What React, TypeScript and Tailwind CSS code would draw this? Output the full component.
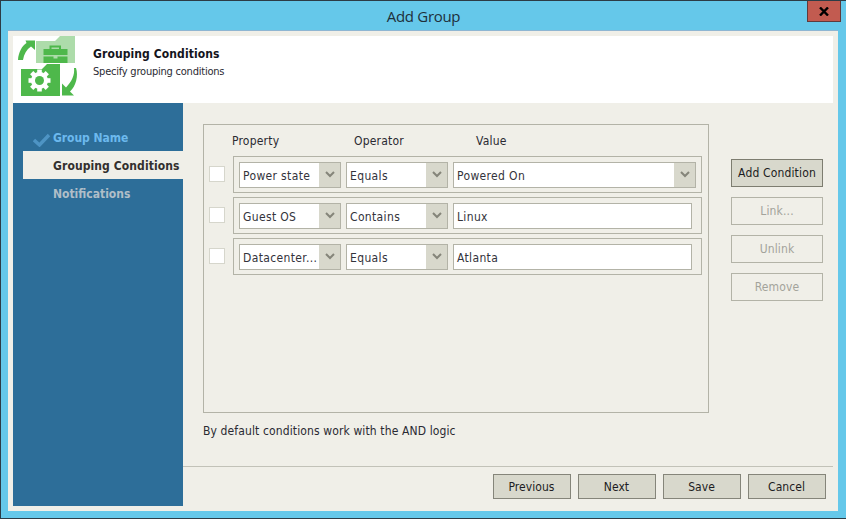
import React from "react";

const font = { fontFamily: '"DejaVu Sans Condensed", "DejaVu Sans", sans-serif' };

function Chevron() {
  return (
    <svg width="10" height="7" viewBox="0 0 10 7">
      <path d="M1 1 L5 5 L9 1" fill="none" stroke="#85857a" strokeWidth="2" />
    </svg>
  );
}

function Select({ label, w }: { label: string; w: string }) {
  return (
    <div className={`${w} h-[26px] flex border border-[#b3b3a7] bg-white`}>
      <div className="flex-1 min-w-0 pl-[3px] pt-[1px] leading-[24px] text-[12px] text-[#33333b] whitespace-nowrap overflow-hidden tracking-[0.35px]">{label}</div>
      <div className="w-[21px] bg-[#d8d8cc] flex items-center justify-center"><Chevron /></div>
    </div>
  );
}

function TextField({ label }: { label: string }) {
  return (
    <div className="w-[239px] h-[26px] border border-[#b3b3a7] bg-white pl-[3px] pt-[1px] leading-[24px] text-[12px] text-[#33333b] tracking-[0.35px]">{label}</div>
  );
}

function Row({ prop, op, value, select }: { prop: string; op: string; value: string; select?: boolean }) {
  return (
    <div className="flex items-start gap-[8px]">
      <div className="w-[16px] h-[16px] mt-[10px] bg-white border border-[#d6d6cc]" />
      <div className="w-[469px] h-[37px] border border-[#b3b3a7] pl-[5px] flex items-center gap-[5px]">
        <Select label={prop} w="w-[102px]" />
        <Select label={op} w="w-[102px]" />
        {select ? <Select label={value} w="w-[243px]" /> : <TextField label={value} />}
      </div>
    </div>
  );
}

function SideButton({ label, active }: { label: string; active?: boolean }) {
  return (
    <div className={`w-[92px] h-[28px] flex items-center justify-center text-[12px] tracking-[0.15px] border ${active ? "bg-[#d8d8cc] border-[#7d7d70] text-[#1c1c22]" : "border-[#b3b3a7] text-[#a3a39b]"}`}>{label}</div>
  );
}

function FootButton({ label }: { label: string }) {
  return (
    <div className="w-[78px] h-[25px] flex items-center justify-center bg-[#d8d8cc] border border-[#85857a] text-[12px] text-[#1c1c22] tracking-[0.05px] pr-[1px]">{label}</div>
  );
}

function Logo() {
  return (
    <svg width="64" height="64" viewBox="16 36 64 64" className="shrink-0">
      <path d="M36 41 H55 L60 36 H75 V63 H36 Z" fill="#addcaa" />
      <path d="M49.5 49 V45.5 H61 V49 H59 V47.5 H51.5 V49 Z" fill="#4eb84b" />
      <path d="M43.5 49 H67.5 V55 H43.5 Z M43.5 56.5 H53.5 V58.5 H57.5 V56.5 H67.5 V63 H43.5 Z" fill="#4eb84b" />
      <path d="M19.5 63.5 H61 V97 H19.5 Z" fill="#fff" />
      <path d="M21 69 H42 L47 64 H60 V96 H21 Z" fill="#4eb84b" />
      <path d="M18 60 C18.5 52 22 46 26.5 43 L25.5 40.5 H35 V50 L31 46.5 C26.5 49.5 24 54 23 60 Z" fill="#4eb84b" />
      <path d="M76 68 C78.5 76 76 86 70 91.5 L74 95.5 H62 V83.5 L66 87.5 C71.5 82 75 75 74 68 Z" fill="#4eb84b" />
      <g fill="#fff">
        <circle cx="39.5" cy="80.5" r="8.5" />
        {[0, 45, 90, 135, 180, 225, 270, 315].map((a) => (
          <rect key={a} x="37.2" y="69.5" width="4.6" height="5" transform={`rotate(${a} 39.5 80.5)`} />
        ))}
      </g>
      <circle cx="39.5" cy="80.5" r="4.5" fill="#4eb84b" />
    </svg>
  );
}

export default function App() {
  return (
    <div className="w-[846px] h-[519px] bg-[#65c8ea] border-t border-l border-b border-[#2c3c46] flex flex-col overflow-hidden" style={font}>
      <div className="h-[29px] shrink-0 grid grid-cols-[1fr_auto_1fr] items-start">
        <div />
        <div className="text-[15px] leading-[30px] text-[#20303a] tracking-[-0.3px]" style={{ fontFamily: '"Open Sans", "Noto Sans", sans-serif' }}>Add Group</div>
        <div className="justify-self-end mr-[5px] w-[34px] h-[21px] bg-[#c25b50] border-x border-b border-[#5f3a3c] flex items-center justify-center">
          <svg width="10" height="9" viewBox="0 0 10 9"><path d="M1 0.5 L9 8.5 M9 0.5 L1 8.5" stroke="#000" strokeWidth="2.4" /></svg>
        </div>
      </div>
      <div className="ml-[7px] w-[830px] h-[481px] border-t border-[#8fb6d2] bg-[#f0efe8] p-[5px] flex flex-col">
        <div className="h-[67px] bg-white flex shrink-0 pl-[3px]">
          <Logo />
          <div className="pl-[13px] pt-[10px] text-black">
            <div className="font-bold text-[12px] leading-[16px] text-[#14141c] tracking-[0.1px]">Grouping Conditions</div>
            <div className="text-[11px] leading-[16px] mt-[2px] text-[#2a2a32] tracking-[-0.22px]">Specify grouping conditions</div>
          </div>
        </div>
        <div className="flex flex-1 min-h-0">
          <div className="w-[170px] h-[403px] bg-[#2d6e99] pt-[20px] font-bold text-[12px] shrink-0">
            <div className="h-[28px] pt-[2px] flex items-center text-[#6cb9ee]">
              <svg width="20" height="14" viewBox="0 0 20 14" className="ml-[20px] mt-[3px]"><path d="M1 7 L6.5 12 L16 2" fill="none" stroke="#4e94c4" strokeWidth="3.4" /></svg>
              <span className="tracking-[-0.05px]">Group Name</span>
            </div>
            <div className="h-[28px] pt-[2px] ml-[10px] bg-[#f0efe8] flex items-center pl-[30px] text-[#33302e] whitespace-nowrap tracking-[0.1px]">Grouping Conditions</div>
            <div className="h-[28px] pt-[2px] flex items-center pl-[40px] text-[#b0bec8]">Notifications</div>
          </div>
          <div className="flex-1 flex flex-col">
            <div className="flex-1 pt-[21px] pl-[20px]">
              <div className="flex items-start">
                <div className="w-[506px] h-[289px] border border-[#b3b3a7] pl-[5px] shrink-0">
                  <div className="h-[31px] flex items-center text-[12px] text-[#2a2a32] tracking-[0.2px] pl-[23px]">
                    <div className="w-[122px]">Property</div>
                    <div className="w-[122px]">Operator</div>
                    <div>Value</div>
                  </div>
                  <div className="flex flex-col gap-[4px]">
                    <Row prop="Power state" op="Equals" value="Powered On" select />
                    <Row prop="Guest OS" op="Contains" value="Linux" />
                    <Row prop="Datacenter..." op="Equals" value="Atlanta" />
                  </div>
                </div>
                <div className="ml-[22px] mt-[35px] flex flex-col gap-[10px]">
                  <SideButton label="Add Condition" active />
                  <SideButton label="Link..." />
                  <SideButton label="Unlink" />
                  <SideButton label="Remove" />
                </div>
              </div>
              <div className="mt-[10px] text-[12px] leading-[16px] text-[#2a2a32] tracking-[0.12px]">By default conditions work with the AND logic</div>
            </div>
            <div className="h-[40px] border-t border-[#c2c2b8] pt-[7px] pr-[7px] flex justify-end gap-[7px]">
              <FootButton label="Previous" />
              <FootButton label="Next" />
              <FootButton label="Save" />
              <FootButton label="Cancel" />
            </div>
          </div>
        </div>
      </div>
    </div>
  );
}
